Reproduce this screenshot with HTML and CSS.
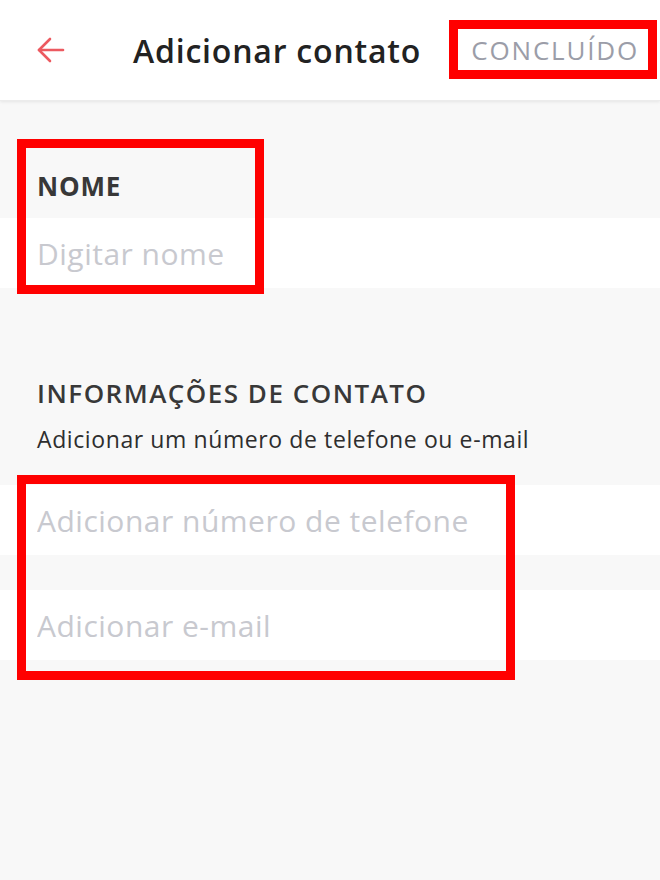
FILE: index.html
```html
<!DOCTYPE html>
<html lang="pt-BR">
<head>
    <meta charset="UTF-8">
    <meta name="viewport" content="width=device-width, initial-scale=1.0">
    <title>Adicionar contato</title>
    <link rel="stylesheet" href="styles.css">
</head>
<body>

    <header class="top-bar">
        <button class="back-button" aria-label="Voltar">
            <svg width="32" height="32" viewBox="0 0 32 32" fill="none" stroke="#ec5a60" stroke-width="2.6" stroke-linecap="round" stroke-linejoin="round">
                <path d="M28 16H4"/>
                <path d="M15 5L4 16l11 11"/>
            </svg>
        </button>
        <h1 class="title">Adicionar contato</h1>
        <button class="done-button">CONCLUÍDO</button>
    </header>

    <main class="form">
        <section class="name-section">
            <h2 class="label">NOME</h2>
            <div class="field">
                <input type="text" placeholder="Digitar nome">
            </div>
        </section>

        <section class="contact-section">
            <h2 class="label contact-label">INFORMAÇÕES DE CONTATO</h2>
            <p class="hint">Adicionar um número de telefone ou e-mail</p>
            <div class="field">
                <input type="tel" placeholder="Adicionar número de telefone">
            </div>
            <div class="field email-field">
                <input type="email" placeholder="Adicionar e-mail">
            </div>
        </section>
    </main>

    <!-- red highlight boxes drawn over the screen -->
    <div class="mark mark-done"></div>
    <div class="mark mark-name"></div>
    <div class="mark mark-contact"></div>

</body>
</html>
```

FILE: styles.css
```css
body {
    font-family: "Open Sans", Lato, sans-serif;
    background-color: #f8f8f8;
    margin: 0;
    position: relative;
    min-height: 880px;
    color: #333;
}

/* --- Header --- */
.top-bar {
    height: 101px;
    background-color: #fff;
    display: flex;
    align-items: center;
    box-shadow: 0 1px 3px rgba(0, 0, 0, 0.08);
    border-bottom: 1px solid #ececec;
    box-sizing: border-box;
}

.back-button {
    border: none;
    background: none;
    padding: 0;
    margin-left: 35px;
    width: 32px;
    height: 32px;
    cursor: pointer;
}

.title {
    margin: 0 0 0 66px;
    font-size: 32px;
    font-weight: 600;
    letter-spacing: 0.8px;
    color: #222;
}

.done-button {
    margin-left: auto;
    margin-right: 21px;
    border: none;
    background: none;
    padding: 0;
    font-family: inherit;
    font-size: 26px;
    letter-spacing: 1.8px;
    color: #9b9da8;
}

/* --- Form --- */
.label {
    margin: 0;
    padding-left: 37px;
    font-size: 26px;
    font-weight: 700;
    letter-spacing: 0.8px;
    line-height: 30px;
    color: #383838;
}

.name-section .label {
    padding-top: 70px;
    padding-bottom: 17px;
}

.field {
    height: 70px;
    background-color: #fff;
    display: flex;
    align-items: center;
}

.field input {
    border: none;
    outline: none;
    background: none;
    width: 100%;
    padding: 0 0 0 37px;
    font-family: inherit;
    font-size: 30px;
    letter-spacing: 0.5px;
    color: #333;
}

.field input::placeholder {
    color: #c8c9cf;
}

.contact-label {
    margin-top: 89px;
    font-weight: 600;
    letter-spacing: 1.5px;
    line-height: 32px;
}

.hint {
    margin: 16px 0 32px;
    padding-left: 37px;
    font-size: 23px;
    letter-spacing: 0.6px;
    line-height: 28px;
    color: #2e2e2e;
}

.email-field {
    margin-top: 35px;
}

/* --- Red annotation boxes --- */
.mark {
    position: absolute;
    border: 9px solid #ff0000;
    box-sizing: border-box;
    pointer-events: none;
}

.mark-done {
    left: 449px;
    top: 20px;
    width: 208px;
    height: 59px;
}

.mark-name {
    left: 17px;
    top: 139px;
    width: 247px;
    height: 155px;
}

.mark-contact {
    left: 17px;
    top: 475px;
    width: 498px;
    height: 205px;
}
```
